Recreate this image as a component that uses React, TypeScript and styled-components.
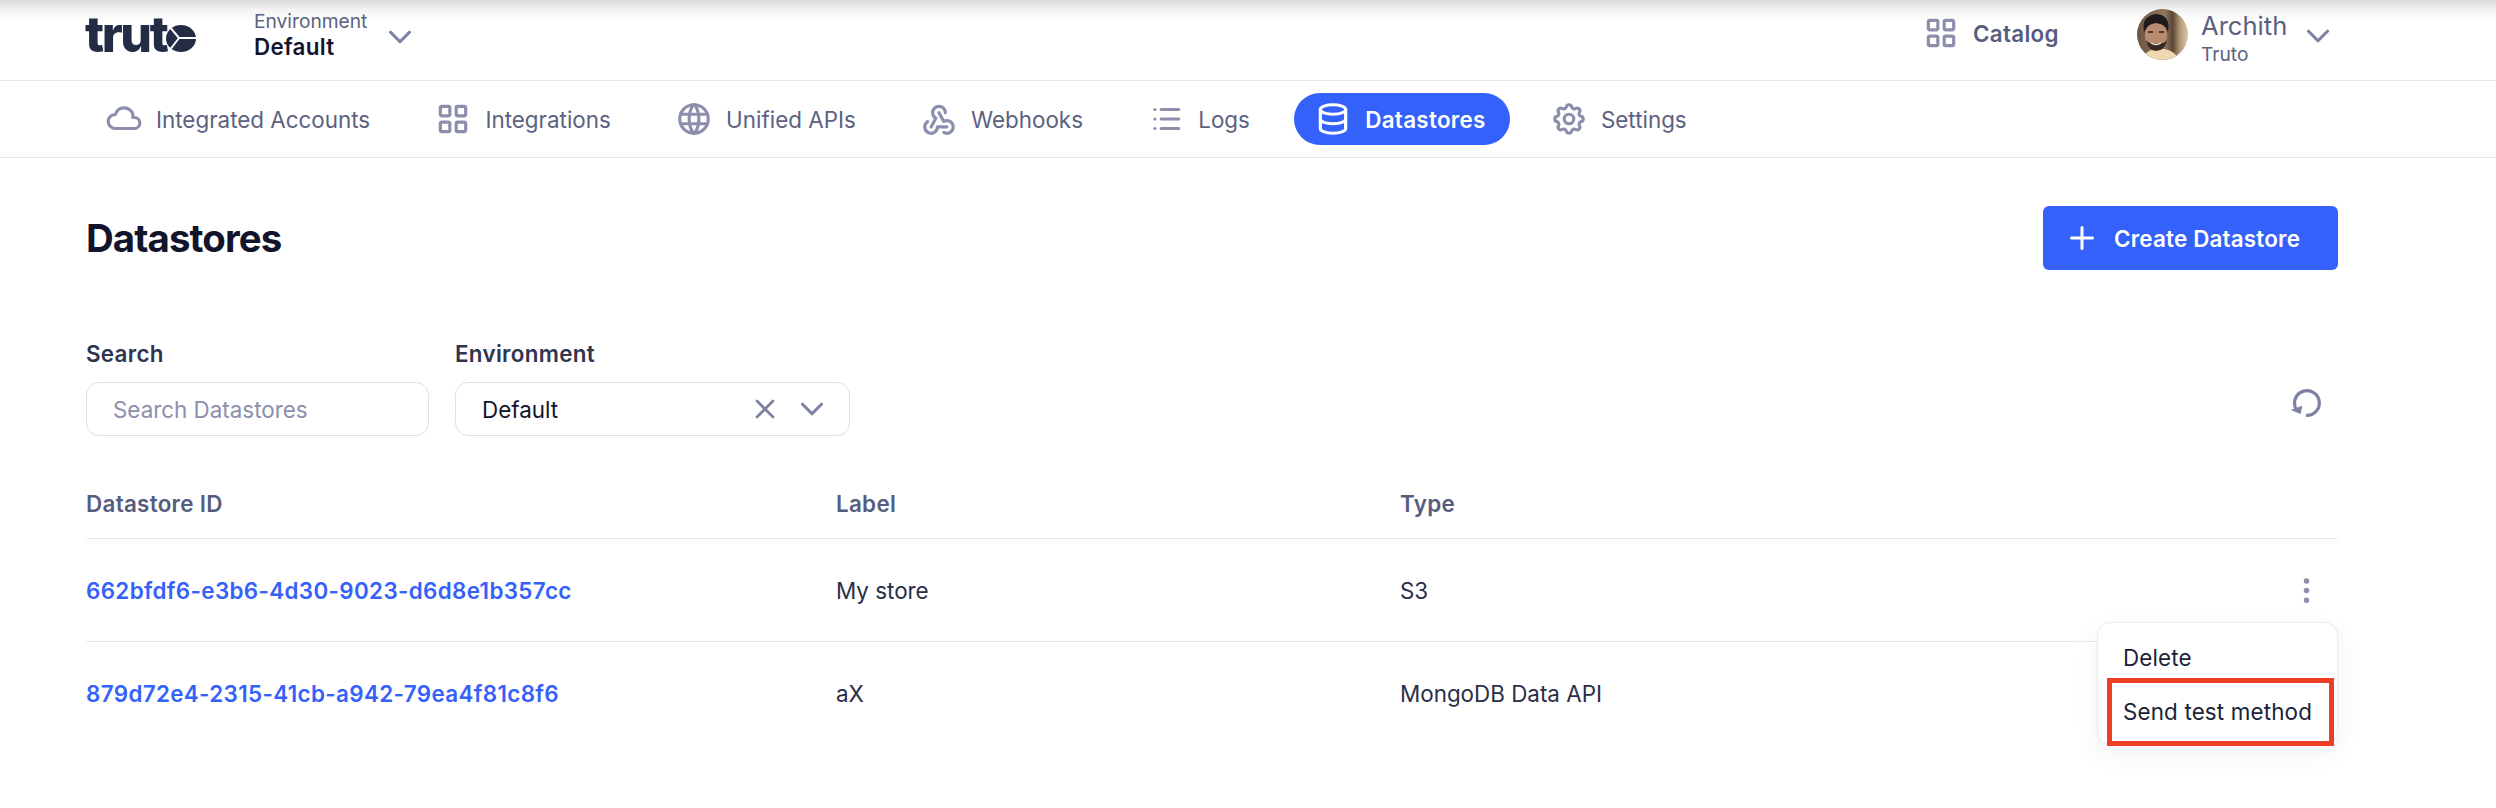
import React from 'react';
import styled, { createGlobalStyle } from 'styled-components';
import { TbCloud, TbLayoutGrid, TbWorld, TbWebhook, TbList, TbDatabase, TbSettings, TbPlus, TbX, TbChevronDown, TbDotsVertical } from 'react-icons/tb';

const Global = createGlobalStyle`
  html, body { margin: 0; padding: 0; background: #fff; }
  body { font-family: Inter, "Liberation Sans", sans-serif; color: #12142b; }
  * { box-sizing: border-box; }
`;
const Page = styled.div`width: 2496px; height: 808px; overflow: hidden; background: #fff; position: relative;`;
const TopShade = styled.div`position: absolute; inset: 0 0 auto 0; height: 22px; background: linear-gradient(#d9d9d9, #f3f3f3 45%, #ffffff); pointer-events: none;`;
const Header = styled.header`height: 81px; border-bottom: 1.5px solid #e6e8f2; padding: 0 0 0 86px; display: flex; align-items: center; position: relative;`;
const Logo = styled.div`display: flex; align-items: center; width: 169px; height: 60px; color: #242c45; margin-top: -12px; margin-left: -1px; padding-right: 1px;`;
const LogoText = styled.span`font-family: Inter, sans-serif; font-weight: 800; font-size: 50px; letter-spacing: -2.4px; line-height: 1;`;
const LogoMark = styled.svg`width: 30px; height: 27px; margin-top: 9px; flex: none;`;
const EnvPicker = styled.div`display: flex; align-items: center; gap: 14px; margin-top: -10px;`;
const EnvCol = styled.div`display: flex; flex-direction: column;`;
const EnvLabel = styled.span`font-size: 19.2px; line-height: 24px; color: #5c617f;`;
const EnvValue = styled.span`font-size: 22.4px; line-height: 28px; font-weight: 600; letter-spacing: 0.3px; color: #12142b;`;
const ChevronHead = styled(TbChevronDown)`width: 38px; height: 38px; color: #7d82a3; margin-top: 4px; flex: none;`;
const Spacer = styled.div`flex: 1;`;
const Catalog = styled.div`display: flex; align-items: center; gap: 13px; width: 215px; margin-top: -14px; font-size: 22.4px; font-weight: 600; letter-spacing: 0.3px; color: #565c7e;`;
const CatalogIcon = styled(TbLayoutGrid)`width: 38px; height: 38px; color: #8b8fac;`;
const User = styled.div`display: flex; align-items: center; width: 222px; margin-right: 137px; margin-top: -12px;`;
const Avatar = styled.svg`width: 51px; height: 51px; border-radius: 50%; flex: none;`;
const UserCol = styled.div`display: flex; flex-direction: column; gap: 1px; margin: 8px 0 0 13px; width: 98px;`;
const UserName = styled.span`font-size: 25.6px; line-height: 30px; color: #5c617f;`;
const UserOrg = styled.span`font-size: 19.2px; line-height: 24px; color: #5c617f;`;
const Nav = styled.nav`height: 77px; border-bottom: 1.5px solid #e6e8f2; padding: 0 0 0 85px; display: flex; align-items: center; gap: 20.3px;`;
const NavItem = styled.div<{ $active?: boolean }>`
  display: flex; align-items: center; gap: 13px; height: 52px; padding: 0 24px 0 20px; border-radius: 26px;
  font-size: 22.4px; font-weight: ${p => (p.$active ? 600 : 400)}; letter-spacing: ${p => (p.$active ? '0.3px' : '0')};
  color: ${p => (p.$active ? '#fff' : '#5c617f')};
  background: ${p => (p.$active ? '#3461fa' : 'transparent')};
  svg { width: 38px; height: 38px; color: ${p => (p.$active ? '#fff' : '#8b8fac')}; flex: none; }
`;
const Main = styled.main`padding: 48px 158px 0 86px;`;
const TitleRow = styled.div`display: flex; justify-content: space-between; align-items: center; height: 64px;`;
const Title = styled.h1`margin: 0; font-size: 38.4px; font-weight: 700; color: #12142b; letter-spacing: -0.9px;`;
const CreateButton = styled.button`
  display: flex; align-items: center; gap: 14px; height: 64px; width: 295px; padding: 0 21px; border: 0; border-radius: 6px;
  background: #3461fa; color: #fff; font: 600 22.4px Inter, sans-serif; letter-spacing: 0.2px;
  svg { width: 36px; height: 36px; }
`;
const Filters = styled.div`display: flex; align-items: flex-end; gap: 26px; margin-top: 70px;`;
const Field = styled.div`display: flex; flex-direction: column; gap: 14px;`;
const FieldLabel = styled.label`font-size: 22.4px; line-height: 28px; font-weight: 600; letter-spacing: 0.3px; color: #30354f;`;
const InputBox = styled.div<{ $w: number }>`
  width: ${p => p.$w}px; height: 54px; border: 1.5px solid #dcdfee; border-radius: 13px; padding: 0 26px;
  display: flex; align-items: center; font-size: 22.4px;
`;
const Placeholder = styled.span`color: #8b8fac;`;
const SelectValue = styled.span`flex: 1; color: #12142b;`;
const SelectIcons = styled.div`display: flex; align-items: center; gap: 12px; margin-right: -8px; color: #7d82a3;`;
const ClearIcon = styled(TbX)`width: 32px; height: 32px;`;
const SelectChevron = styled(TbChevronDown)`width: 38px; height: 38px;`;
const Refresh = styled.svg`width: 40px; height: 40px; margin: 0 11px 13px auto; color: #7d82a3; flex: none;`;
const Table = styled.div`margin-top: 44px; position: relative;`;
const Row = styled.div<{ $head?: boolean; $last?: boolean }>`
  display: grid; grid-template-columns: 750px 564px 1fr 60px; align-items: center;
  height: ${p => (p.$head ? '59px' : '103px')}; padding-bottom: ${p => (p.$head ? '12px' : '0')};
  border-bottom: ${p => (p.$last ? '0' : '1.5px solid #e6e8f2')};
  font-size: 22.4px;
`;
const HeadCell = styled.div`font-weight: 600; letter-spacing: 0.3px; color: #565c7e;`;
const LinkCell = styled.div`font-weight: 600; letter-spacing: 0.35px; color: #3461fa;`;
const Cell = styled.div`color: #2a2e47;`;
const Kebab = styled(TbDotsVertical)`justify-self: end; width: 33px; height: 33px; margin-right: 15px; color: #8b8fac;`;
const Menu = styled.div`
  position: absolute; right: 0; top: 142px; width: 241px; height: 123px; background: #fff; border: 1.5px solid #e8eaf4; border-radius: 13px;
  box-shadow: 0 8px 24px rgba(40, 50, 90, 0.07); padding: 7px 0 0 25px;
  font-size: 22.4px; letter-spacing: 0.15px; color: #1c1f38;
`;
const MenuItem = styled.div`height: 54px; display: flex; align-items: center;`;
const Highlight = styled.div`position: absolute; left: 8.5px; right: 3.5px; top: 54.5px; bottom: -1.5px; border: 5px solid #ec3f23;`;

export default function App() {
  return (
    <Page>
      <Global />
      <TopShade />
      <Header>
        <Logo>
          <LogoText>trut</LogoText>
          <LogoMark viewBox="0 0 30 27">
            <ellipse cx="15" cy="13.5" rx="15" ry="13.5" fill="#242c45" />
            <path d="M3 1 L13 13 L30 13 M13 13 L3 26" fill="none" stroke="#fff" strokeWidth="2" />
          </LogoMark>
        </Logo>
        <EnvPicker>
          <EnvCol>
            <EnvLabel>Environment</EnvLabel>
            <EnvValue>Default</EnvValue>
          </EnvCol>
          <ChevronHead />
        </EnvPicker>
        <Spacer />
        <Catalog><CatalogIcon />Catalog</Catalog>
        <User>
          <Avatar viewBox="0 0 51 51">
            <defs>
              <linearGradient id="curtain" x1="0" x2="1" y1="0" y2="0">
                <stop offset="0" stopColor="#6a5643" />
                <stop offset="0.55" stopColor="#8d7659" />
                <stop offset="0.7" stopColor="#5c4736" />
                <stop offset="0.85" stopColor="#b89e7c" />
                <stop offset="1" stopColor="#d9c6a8" />
              </linearGradient>
            </defs>
            <rect width="51" height="51" fill="url(#curtain)" />
            <path d="M6 51 Q8 42 17 40 L28 40 Q38 42 42 51 Z" fill="#f0d8b2" />
            <ellipse cx="19" cy="27" rx="11" ry="14" fill="#b98b70" />
            <path d="M7 23 Q4 7 19 5 Q34 6 31 23 Q29 15 19 14 Q10 15 7 23 Z" fill="#1f1b1b" />
            <path d="M9 31 Q11 42 19 42 Q28 42 30 31 Q26 36 19 34 Q13 36 9 31 Z" fill="#3b2a22" />
            <path d="M14 34 Q19 37 24 34" fill="none" stroke="#f0e6dc" strokeWidth="1.4" />
            <path d="M11 23 h5 M22 23 h5" stroke="#2a2020" strokeWidth="1.6" />
          </Avatar>
          <UserCol>
            <UserName>Archith</UserName>
            <UserOrg>Truto</UserOrg>
          </UserCol>
          <ChevronHead />
        </User>
      </Header>
      <Nav>
        <NavItem><TbCloud />Integrated Accounts</NavItem>
        <NavItem><TbLayoutGrid />Integrations</NavItem>
        <NavItem><TbWorld />Unified APIs</NavItem>
        <NavItem><TbWebhook />Webhooks</NavItem>
        <NavItem><TbList />Logs</NavItem>
        <NavItem $active><TbDatabase />Datastores</NavItem>
        <NavItem><TbSettings />Settings</NavItem>
      </Nav>
      <Main>
        <TitleRow>
          <Title>Datastores</Title>
          <CreateButton><TbPlus />Create Datastore</CreateButton>
        </TitleRow>
        <Filters>
          <Field>
            <FieldLabel>Search</FieldLabel>
            <InputBox $w={343}><Placeholder>Search Datastores</Placeholder></InputBox>
          </Field>
          <Field>
            <FieldLabel>Environment</FieldLabel>
            <InputBox $w={395}>
              <SelectValue>Default</SelectValue>
              <SelectIcons><ClearIcon /><SelectChevron /></SelectIcons>
            </InputBox>
          </Field>
          <Refresh viewBox="0 0 40 40">
            <path d="M19 32.4 A12.4 12.4 0 1 0 8.8 25.5" fill="none" stroke="currentColor" strokeWidth="3.2" />
            <path d="M3.7 27 L15.3 22.7 L13.7 31 Z" fill="currentColor" />
          </Refresh>
        </Filters>
        <Table>
          <Row $head>
            <HeadCell>Datastore ID</HeadCell>
            <HeadCell>Label</HeadCell>
            <HeadCell>Type</HeadCell>
            <div />
          </Row>
          <Row>
            <LinkCell>662bfdf6-e3b6-4d30-9023-d6d8e1b357cc</LinkCell>
            <Cell>My store</Cell>
            <Cell>S3</Cell>
            <Kebab />
          </Row>
          <Row $last>
            <LinkCell>879d72e4-2315-41cb-a942-79ea4f81c8f6</LinkCell>
            <Cell>aX</Cell>
            <Cell>MongoDB Data API</Cell>
            <div />
          </Row>
          <Menu>
            <MenuItem>Delete</MenuItem>
            <MenuItem>Send test method</MenuItem>
            <Highlight />
          </Menu>
        </Table>
      </Main>
    </Page>
  );
}
